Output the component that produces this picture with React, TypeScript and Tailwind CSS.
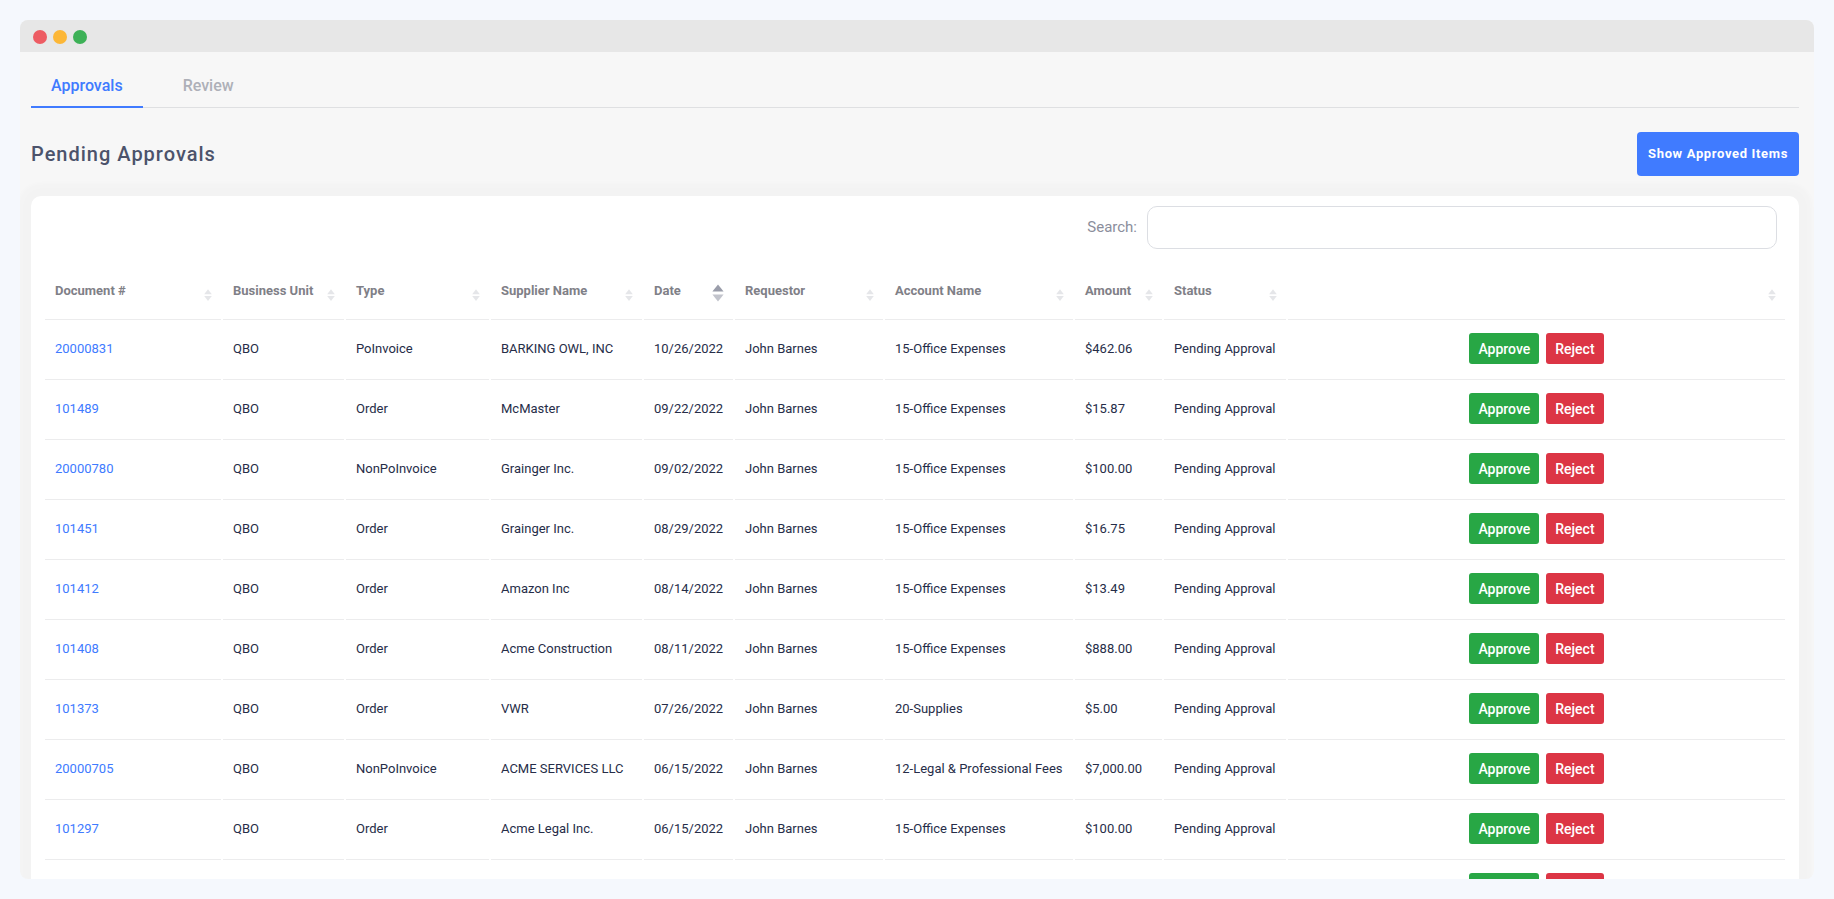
import { useState } from "react";

type Row = {
  doc: string;
  type: string;
  supplier: string;
  date: string;
  account: string;
  amount: string;
};

const office = "15-Office Expenses";

const rows: Row[] = [
  { doc: "20000831", type: "PoInvoice", supplier: "BARKING OWL, INC", date: "10/26/2022", account: office, amount: "$462.06" },
  { doc: "101489", type: "Order", supplier: "McMaster", date: "09/22/2022", account: office, amount: "$15.87" },
  { doc: "20000780", type: "NonPoInvoice", supplier: "Grainger Inc.", date: "09/02/2022", account: office, amount: "$100.00" },
  { doc: "101451", type: "Order", supplier: "Grainger Inc.", date: "08/29/2022", account: office, amount: "$16.75" },
  { doc: "101412", type: "Order", supplier: "Amazon Inc", date: "08/14/2022", account: office, amount: "$13.49" },
  { doc: "101408", type: "Order", supplier: "Acme Construction", date: "08/11/2022", account: office, amount: "$888.00" },
  { doc: "101373", type: "Order", supplier: "VWR", date: "07/26/2022", account: "20-Supplies", amount: "$5.00" },
  { doc: "20000705", type: "NonPoInvoice", supplier: "ACME SERVICES LLC", date: "06/15/2022", account: "12-Legal & Professional Fees", amount: "$7,000.00" },
  { doc: "101297", type: "Order", supplier: "Acme Legal Inc.", date: "06/15/2022", account: office, amount: "$100.00" },
  { doc: "101290", type: "Order", supplier: "Acme Legal Inc.", date: "06/14/2022", account: office, amount: "$100.00" },
];

const columns = [
  { label: "Document #", width: "w-[176px]" },
  { label: "Business Unit", width: "w-[121px]" },
  { label: "Type", width: "w-[143px]" },
  { label: "Supplier Name", width: "w-[151px]" },
  { label: "Date", width: "w-[89px]" },
  { label: "Requestor", width: "w-[148px]" },
  { label: "Account Name", width: "w-[188px]" },
  { label: "Amount", width: "w-[87px]" },
  { label: "Status", width: "w-[122px]" },
  { label: "", width: "w-auto" },
];

function SortIcon({ active }: { active: boolean }) {
  return active ? (
    <svg viewBox="0 0 12 18" className="mt-1 h-[18px] w-3 shrink-0" aria-hidden="true">
      <path d="M6 0.5 11.6 7.6H0.4Z" fill="#9a9daa" />
      <path d="M6 17.6 11.6 10.6H0.4Z" fill="#c2c4cc" />
    </svg>
  ) : (
    <svg viewBox="0 0 8 12" className="mt-2 h-3 w-2 shrink-0" aria-hidden="true">
      <path d="M4 0.2 7.8 5.2H0.2Z" fill="#e5e6e9" />
      <path d="M4 12 7.8 7H0.2Z" fill="#e5e6e9" />
    </svg>
  );
}

function WindowBar() {
  return (
    <div className="flex h-8 shrink-0 items-center gap-[6px] bg-[#e7e7e7] px-[13px] pt-[2px]">
      <span className="size-[14px] rounded-full bg-[#ed5c63]" />
      <span className="size-[14px] rounded-full bg-[#fcb737]" />
      <span className="size-[14px] rounded-full bg-[#3db157]" />
    </div>
  );
}

function Tabs() {
  return (
    <nav className="flex h-14 shrink-0 gap-5 border-b border-[#dfe0e2]">
      <a href="#approvals" aria-current="page" className="-mb-px flex items-center border-b-2 border-[#407bff] px-5 pt-[18px] pb-1 text-base font-medium text-[#407bff]">
        Approvals
      </a>
      <a href="#review" className="-mb-px flex items-center border-b-2 border-transparent px-5 pt-[18px] pb-1 text-base font-medium text-[#aeb0b8]">
        Review
      </a>
    </nav>
  );
}

function ApprovalsTable() {
  return (
    <table className="w-full table-fixed border-separate border-spacing-[2px] text-[13px] leading-4 text-[#262d48]">
      <colgroup>
        {columns.map((c, i) => (
          <col key={i} className={c.width} />
        ))}
      </colgroup>
      <thead>
        <tr>
          {columns.map((c, i) => (
            <th key={i} className="h-[53px] p-0 text-left">
              <button type="button" aria-label={c.label ? undefined : "Actions"} className="flex w-full items-center justify-between pr-[9px] pl-[10px] font-bold whitespace-nowrap text-[#7f8087]">
                <span>{c.label}</span>
                <SortIcon active={c.label === "Date"} />
              </button>
            </th>
          ))}
        </tr>
      </thead>
      <tbody>
        {rows.map((r) => (
          <tr key={r.doc} className="[&>td]:h-[58px] [&>td]:border-t [&>td]:border-[#ececed] [&>td]:px-[10px] [&>td]:py-0 [&>td]:whitespace-nowrap">
            <td>
              <a href={"#" + r.doc} className="text-[#407bff]">{r.doc}</a>
            </td>
            <td>QBO</td>
            <td>{r.type}</td>
            <td>{r.supplier}</td>
            <td>{r.date}</td>
            <td>John Barnes</td>
            <td>{r.account}</td>
            <td>{r.amount}</td>
            <td>Pending Approval</td>
            <td>
              <div className="flex justify-center gap-[7px] text-sm leading-4 font-medium text-white">
                <button type="button" className="h-[31px] rounded-[3px] bg-[#28a745] px-[9px]">Approve</button>
                <button type="button" className="h-[31px] rounded-[3px] bg-[#dc3545] px-[9px]">Reject</button>
              </div>
            </td>
          </tr>
        ))}
      </tbody>
    </table>
  );
}

export default function App() {
  const [query, setQuery] = useState("");
  return (
    <div className="flex h-screen flex-col bg-[#f5f8fd] p-5 font-['Roboto',sans-serif]">
      <div className="flex min-h-0 flex-1 flex-col overflow-hidden rounded-lg bg-[#f7f7f7]">
        <WindowBar />
        <main className="flex min-h-0 flex-1 flex-col overflow-y-auto pr-[15px] pl-[11px] [scrollbar-width:none]">
          <Tabs />
          <header className="flex shrink-0 items-center justify-between pt-6 pb-5">
            <h1 className="text-xl font-medium tracking-wider text-[#4c536b]">Pending Approvals</h1>
            <button type="button" className="h-11 rounded bg-[#407bff] px-[11px] text-[13px] font-bold tracking-wider text-white">
              Show Approved Items
            </button>
          </header>
          <section className="shrink-0 rounded-[10px] bg-white px-3 pt-[10px] shadow-[0_0_4px_13px_rgba(0,0,0,0.015)]">
            <div className="mb-[13px] flex items-center justify-end gap-[10px] pr-[10px]">
              <label htmlFor="search" className="text-[15px] text-[#8b8e9c]">Search:</label>
              <input
                id="search"
                type="text"
                value={query}
                onChange={(e) => setQuery(e.target.value)}
                className="h-[43px] w-[630px] rounded-[10px] border border-[#dcdee3] bg-white px-3 text-[15px] text-[#262d48] outline-none"
              />
            </div>
            <ApprovalsTable />
          </section>
        </main>
      </div>
    </div>
  );
}
